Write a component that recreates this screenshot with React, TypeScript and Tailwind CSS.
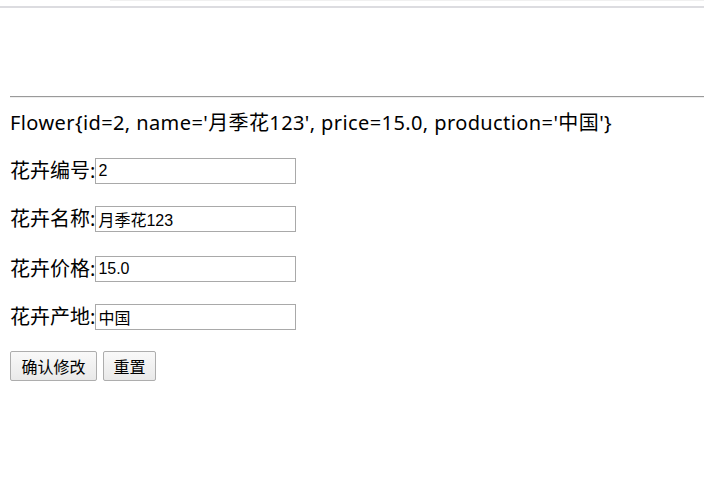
import { useState } from "react";

interface Flower {
    id: number;
    name: string;
    price: string;
    production: string;
}

const inputCls =
    "w-[201px] h-[26px] border border-[#a9a9a9] px-[2px] text-[16px] text-black outline-none font-['Liberation_Sans','Noto_Sans_CJK_SC',sans-serif]";

function Field({ label, value, onChange }: { label: string; value: string; onChange: (v: string) => void }) {
    return (
        <div className="flex items-center h-[26px]">
            <span className="leading-[26px]">{label}:</span>
            <input className={inputCls} value={value} onChange={(e) => onChange(e.target.value)} />
        </div>
    );
}

export default function App() {
    const flower: Flower = { id: 2, name: "月季花123", price: "15.0", production: "中国" };
    const [id, setId] = useState(String(flower.id));
    const [name, setName] = useState(flower.name);
    const [price, setPrice] = useState(flower.price);
    const [production, setProduction] = useState(flower.production);

    return (
        <main className="w-[704px] h-[482px] bg-white text-black text-[20px] font-['Noto_Sans','Noto_Sans_CJK_SC',sans-serif] overflow-hidden">
            {/* browser chrome leftovers */}
            <div className="h-px ml-[110px] bg-[#f0f0f0]" />
            <div className="h-[5px]" />
            <div className="h-[2px] bg-[#dcdce0]" />

            <section className="pl-[10px] pt-[88px]">
                <div className="h-[2px] border-t border-[#9a9a9a] border-b-[#eeeeee] border-b" />

                <p className="mt-[11px] leading-[28px] whitespace-nowrap tracking-[0.4px]">
                    Flower{"{"}id={flower.id}, name='{flower.name}', price={flower.price}, production='{flower.production}'{"}"}
                </p>

                <form className="flex flex-col mt-[21px]" onSubmit={(e) => e.preventDefault()}>
                    <Field label="花卉编号" value={id} onChange={setId} />
                    <div className="h-[22px]" />
                    <Field label="花卉名称" value={name} onChange={setName} />
                    <div className="h-[24px]" />
                    <Field label="花卉价格" value={price} onChange={setPrice} />
                    <div className="h-[22px]" />
                    <Field label="花卉产地" value={production} onChange={setProduction} />

                    <div className="flex gap-[6px] mt-[21px]">
                        <button
                            type="submit"
                            className="h-[30px] w-[87px] border border-[#adadad] rounded-[2px] bg-gradient-to-b from-[#f9f9f9] to-[#e9e9e9] text-[16px] font-['Noto_Sans_CJK_SC',sans-serif]"
                        >
                            确认修改
                        </button>
                        <button
                            type="reset"
                            className="h-[30px] w-[53px] border border-[#adadad] rounded-[2px] bg-gradient-to-b from-[#f9f9f9] to-[#e9e9e9] text-[16px] font-['Noto_Sans_CJK_SC',sans-serif]"
                            onClick={() => {
                                setId(String(flower.id));
                                setName(flower.name);
                                setPrice(flower.price);
                                setProduction(flower.production);
                            }}
                        >
                            重置
                        </button>
                    </div>
                </form>
            </section>
        </main>
    );
}
